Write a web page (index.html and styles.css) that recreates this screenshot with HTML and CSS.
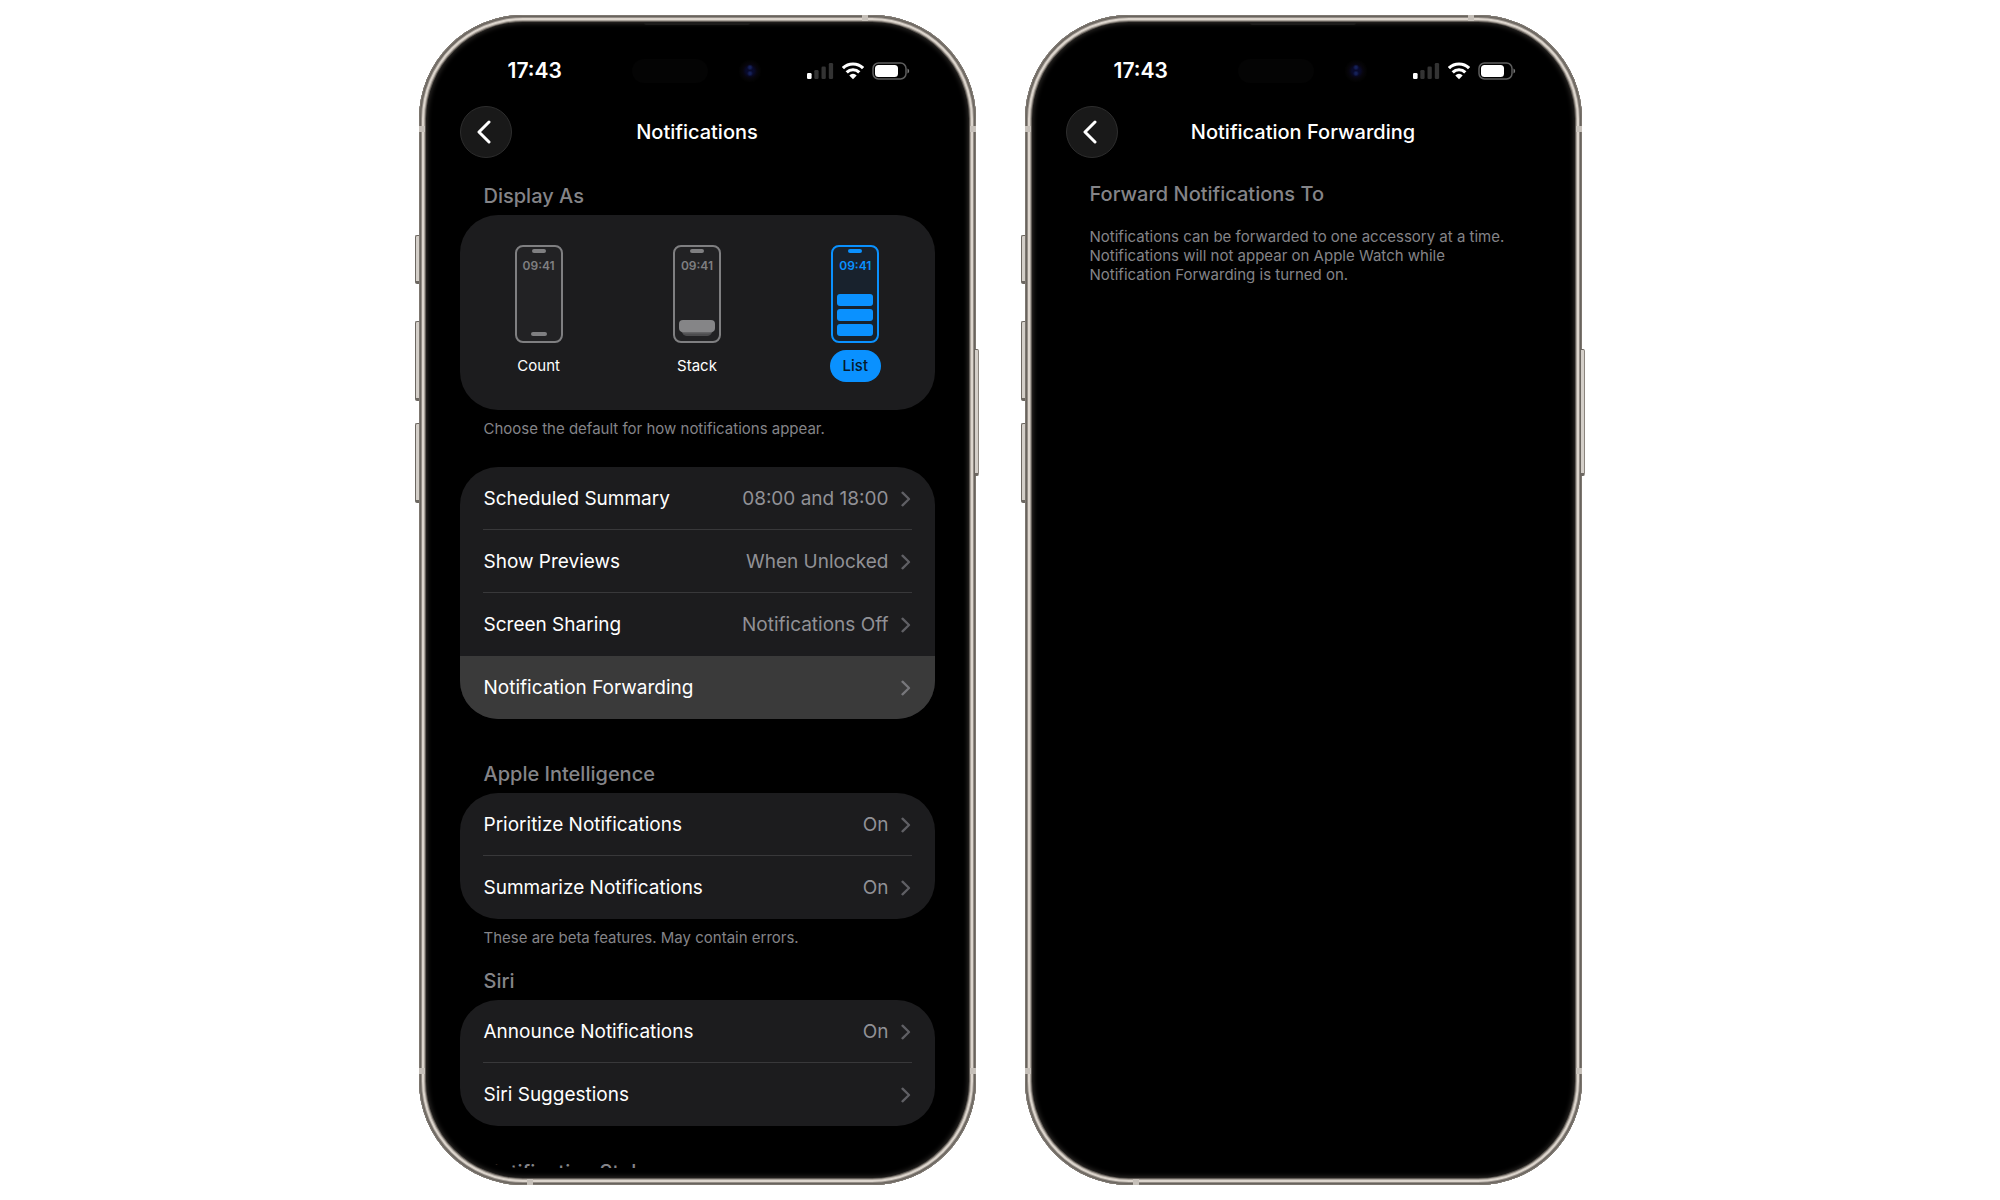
FILE: index.html
```html
<!DOCTYPE html>
<html lang="en">
<head>
<meta charset="utf-8">
<meta name="viewport" content="width=device-width, initial-scale=1">
<title>Notifications</title>
<link rel="stylesheet" href="styles.css">
</head>
<body>
<svg class="sprite" aria-hidden="true">
  <symbol id="chevron" viewBox="0 0 10 16"><path d="M1.500 1.700 8 8 1.500 14.300" fill="none" stroke="currentColor" stroke-width="2.300" stroke-linecap="round" stroke-linejoin="round"/></symbol>
  <symbol id="back" viewBox="0 0 14 24"><path d="M12 2 2 12 12 22" fill="none" stroke="currentColor" stroke-width="3" stroke-linecap="round" stroke-linejoin="round"/></symbol>
  <symbol id="signal" viewBox="0 0 27 18">
    <rect x="0" y="11" width="4.600" height="6" rx="1.300" fill="#fff"/>
    <g fill="#333"><rect x="7.300" y="8" width="4.300" height="9" rx="1.300"/><rect x="14.500" y="4.500" width="4.300" height="12.500" rx="1.300"/><rect x="21.800" y="1" width="4.300" height="16" rx="1.300"/></g>
  </symbol>
  <symbol id="wifi" viewBox="0 0 22 18">
    <g fill="none" stroke="#fff" stroke-width="3.200"><path d="M.9 6.200a14.300 14.300 0 0 1 20.200 0"/><path d="M4.700 10.300a9 9 0 0 1 12.600 0"/></g>
    <path d="M7.300 13.400a5.200 5.200 0 0 1 7.400 0L11 17.300z" fill="#fff"/>
  </symbol>
  <symbol id="battery" viewBox="0 0 38 18">
    <rect x="1" y="1" width="33" height="16" rx="5.500" fill="none" stroke="#5e5e5e" stroke-width="1.500"/>
    <rect x="3" y="3" width="23" height="12" rx="3.500" fill="#fff"/>
    <path d="M35.500 6.500a2.700 2.700 0 0 1 0 5z" fill="#7a7a7a"/>
  </symbol>
</svg>
<main class="stage">
  <section class="phone" aria-label="Notifications">
    <span class="key key-action"></span><span class="key key-up"></span><span class="key key-down"></span><span class="key key-side"></span>
    <span class="band band-left-top"></span><span class="band band-right-top"></span><span class="band band-left-bottom"></span><span class="band band-right-bottom"></span><span class="band band-top"></span><span class="band band-bottom"></span>
    <span class="earpiece"></span>
    <div class="screen">
      <div class="status">
        <time class="clock">17:43</time>
        <div class="island"><span class="sensor"></span><span class="camera"></span></div>
        <div class="indicators"><svg width="27" height="18"><use href="#signal"/></svg><svg width="22" height="18"><use href="#wifi"/></svg><svg width="38" height="18"><use href="#battery"/></svg></div>
      </div>
      <header class="nav">
        <button class="back" type="button" aria-label="Back"><svg width="14" height="24"><use href="#back"/></svg></button>
        <h1 class="title">Notifications</h1>
      </header>
      <div class="content">
        <h2 class="heading">Display As</h2>
        <div class="card styles" role="radiogroup" aria-label="Display As">
          <label class="style">
            <input class="style-input" type="radio" name="display" value="count">
            <span class="mini"><span class="mini-notch"></span><span class="mini-time">09:41</span><span class="mini-count"></span></span>
            <span class="style-name">Count</span>
          </label>
          <label class="style">
            <input class="style-input" type="radio" name="display" value="stack">
            <span class="mini"><span class="mini-notch"></span><span class="mini-time">09:41</span><svg class="mini-stack" width="36" height="16"><path d="M3 11h30c0 3-2 5-6 5H9c-4 0-6-2-6-5z" fill="#4c4c4e"/><path d="M1.500 10h33c-.5 2-2 3.500-5 3.500h-23c-3 0-4.500-1.500-5-3.500z" fill="#636365"/><rect width="36" height="12" rx="4" fill="#858587"/></svg></span>
            <span class="style-name">Stack</span>
          </label>
          <label class="style">
            <input class="style-input" type="radio" name="display" value="list" checked>
            <span class="mini"><span class="mini-notch"></span><span class="mini-time">09:41</span><span class="mini-list"><i class="mini-row"></i><i class="mini-row"></i><i class="mini-row"></i></span></span>
            <span class="style-name">List</span>
          </label>
        </div>
        <p class="note">Choose the default for how notifications appear.</p>
        <nav class="card group-plain">
          <a class="row" href="#summary"><span>Scheduled Summary</span><span class="value">08:00 and 18:00</span><svg class="chev" width="10" height="16"><use href="#chevron"/></svg></a>
          <a class="row" href="#previews"><span>Show Previews</span><span class="value">When Unlocked</span><svg class="chev" width="10" height="16"><use href="#chevron"/></svg></a>
          <a class="row" href="#sharing"><span>Screen Sharing</span><span class="value">Notifications Off</span><svg class="chev" width="10" height="16"><use href="#chevron"/></svg></a>
          <a class="row pressed" href="#forwarding"><span>Notification Forwarding</span><span class="value"></span><svg class="chev" width="10" height="16"><use href="#chevron"/></svg></a>
        </nav>
        <h2 class="heading after-card">Apple Intelligence</h2>
        <nav class="card">
          <a class="row" href="#prioritize"><span>Prioritize Notifications</span><span class="value">On</span><svg class="chev" width="10" height="16"><use href="#chevron"/></svg></a>
          <a class="row" href="#summarize"><span>Summarize Notifications</span><span class="value">On</span><svg class="chev" width="10" height="16"><use href="#chevron"/></svg></a>
        </nav>
        <p class="note">These are beta features. May contain errors.</p>
        <h2 class="heading after-note">Siri</h2>
        <nav class="card">
          <a class="row" href="#announce"><span>Announce Notifications</span><span class="value">On</span><svg class="chev" width="10" height="16"><use href="#chevron"/></svg></a>
          <a class="row" href="#suggestions"><span>Siri Suggestions</span><span class="value"></span><svg class="chev" width="10" height="16"><use href="#chevron"/></svg></a>
        </nav>
        <h2 class="heading last">Notification Style</h2>
      </div>
    </div>
  </section>

  <section class="phone" aria-label="Notification Forwarding">
    <span class="key key-action"></span><span class="key key-up"></span><span class="key key-down"></span><span class="key key-side"></span>
    <span class="band band-left-top"></span><span class="band band-right-top"></span><span class="band band-left-bottom"></span><span class="band band-right-bottom"></span><span class="band band-top"></span><span class="band band-bottom"></span>
    <span class="earpiece"></span>
    <div class="screen">
      <div class="status">
        <time class="clock">17:43</time>
        <div class="island"><span class="sensor"></span><span class="camera"></span></div>
        <div class="indicators"><svg width="27" height="18"><use href="#signal"/></svg><svg width="22" height="18"><use href="#wifi"/></svg><svg width="38" height="18"><use href="#battery"/></svg></div>
      </div>
      <header class="nav">
        <button class="back" type="button" aria-label="Back"><svg width="14" height="24"><use href="#back"/></svg></button>
        <h1 class="title">Notification Forwarding</h1>
      </header>
      <div class="content content-brief">
        <h2 class="heading">Forward Notifications To</h2>
        <p class="note forwarding-note">Notifications can be forwarded to one accessory at a time. Notifications will not appear on Apple Watch while Notification Forwarding is turned on.</p>
      </div>
    </div>
  </section>
</main>
</body>
</html>
```
FILE: styles.css
```css
* { box-sizing: border-box; }
body {
  margin: 0;
  background: #fff;
  color: #fff;
  font-family: Inter, "Liberation Sans", sans-serif;
  font-size: 19px;
  line-height: 26px;
}
h1, h2, p { margin: 0; }
.sprite { display: none; }

.stage {
  display: flex;
  justify-content: center;
  gap: 49px;
  height: 100vh;
  min-height: 800px;
  padding: 15px 24px;
}

/* Phone body */
.phone {
  position: relative;
  display: flex;
  flex: 0 1 557px;
  min-width: 0;
  padding: 8px;
  border-radius: 104px;
  background: #000;
  box-shadow:
    inset 0 0 0 1px #7d7770,
    inset 0 0 0 2px #69645e,
    inset 0 0 0 3px #958e87,
    inset 0 0 0 5px #dcd5cd,
    inset 0 0 0 6px #aaa39b,
    inset 0 0 0 7px #5f5a55,
    inset 0 0 5px 8px #34312e;
}
.key {
  position: absolute;
  left: -4px;
  width: 4px;
  border: 1px solid #6d6862;
  border-right: 0;
  border-bottom-width: 3px;
  border-radius: 2px 0 0 2px;
  background: #d4cfc9;
}
.key-action { top: 220px; height: 49px; }
.key-up { top: 306px; height: 80px; }
.key-down { top: 408px; height: 80px; }
.key-side {
  top: 334px;
  right: -3px;
  left: auto;
  height: 127px;
  border-right: 1px solid #8b857e;
  border-left: 0;
  border-radius: 0 2px 2px 0;
}
.band { position: absolute; background: #c6c0b9; }
.band-left-top, .band-left-bottom { left: 0; width: 6px; height: 6px; }
.band-right-top, .band-right-bottom { right: 0; width: 6px; height: 6px; }
.band-left-top, .band-right-top { top: 111px; }
.band-left-bottom, .band-right-bottom { bottom: 111px; }
.band-top { top: 0; right: 108px; width: 6px; height: 6px; }
.band-bottom { bottom: 0; left: 108px; width: 6px; height: 6px; }
.earpiece {
  position: absolute;
  top: 7px;
  left: 50%;
  width: 106px;
  height: 3px;
  margin-left: -53px;
  border-radius: 0 0 2px 2px;
  background: #1d1c1b;
}

/* Screen */
.screen {
  display: flex;
  flex: 1;
  flex-direction: column;
  min-width: 0;
  margin-bottom: 9px;
  border-radius: 96px;
  overflow: hidden;
}
.status {
  display: grid;
  grid-template-columns: 1fr 130px 1fr;
  align-items: center;
  padding: 35px 0 22px;
}
.clock {
  padding-left: 11px;
  font-size: 21px;
  font-weight: 600;
  text-align: center;
}
.island { display: flex; align-items: center; justify-content: space-between; }
.sensor { width: 76px; height: 24px; border-radius: 12px; background: #040404; }
.camera {
  width: 24px;
  height: 24px;
  border-radius: 50%;
  background:
    radial-gradient(circle at 50% 35%, #152058 0 1px, transparent 3px),
    radial-gradient(circle at 50% 60%, #152058 0 1px, transparent 3px),
    radial-gradient(circle, #080a2c 0 4px, #07050d 7px, #030303 10px, #000 12px);
}
.indicators { display: flex; justify-content: center; gap: 8px; padding-right: 12px; }
.nav {
  display: grid;
  grid-template-columns: 52px 1fr 52px;
  align-items: center;
  padding: 0 33px;
}
.back {
  display: flex;
  align-items: center;
  justify-content: center;
  width: 52px;
  height: 52px;
  padding: 0 4px 0 0;
  border: 1px solid #2e2e2e;
  border-radius: 50%;
  background: #191919;
  color: #fff;
}
.title { font-size: 20px; font-weight: 550; line-height: 26px; text-align: center; white-space: nowrap; }

.content { flex: 1; min-height: 0; padding: 25px 33px 0; }
.content-brief { padding-top: 23px; }
.heading {
  margin: 0 24px 6px;
  color: #848488;
  font-size: 20px;
  font-weight: 550;
  line-height: 26px;
}
.after-card { margin-top: 42px; }
.after-note { margin-top: 21px; }
.last { margin-top: 33px; }
.note {
  margin: 9px 24px 0;
  color: #848488;
  font-size: 15px;
  line-height: 19px;
}
.forwarding-note { margin: 20px 20px 0 24px; }

.card { border-radius: 38px; background: #1c1c1e; overflow: hidden; }
.group-plain { margin-top: 29px; }
.row {
  position: relative;
  display: flex;
  align-items: center;
  height: 63px;
  padding: 0 24px;
  color: #fff;
  text-decoration: none;
  white-space: nowrap;
}
.row + .row::before {
  position: absolute;
  top: -1px;
  right: 23px;
  left: 23px;
  height: 1px;
  background: #38383a;
  content: "";
}
.row.pressed { background: #3a3a3a; }
.row.pressed::before { display: none; }
.value { margin-left: auto; color: #919196; }
.chev { margin-left: 12px; color: #5f5f64; }
.pressed .chev { color: #77777b; }

/* Display style picker */
.styles { display: grid; grid-template-columns: repeat(3, 1fr); padding: 30px 0 28px; }
.style { display: flex; flex-direction: column; align-items: center; gap: 7px; color: #7f7f81; }
.style-input { position: absolute; opacity: 0; pointer-events: none; }
.mini {
  display: flex;
  flex-direction: column;
  align-items: center;
  width: 48px;
  height: 98px;
  padding: 2px 0 5px;
  border: 2px solid currentColor;
  border-radius: 8px;
  background: #222224;
}
.mini-notch { width: 14px; height: 4px; border-radius: 2px; background: currentColor; }
.mini-time { margin-top: 5px; font-size: 12px; font-weight: 600; line-height: 16px; }
.mini-count { width: 16px; height: 4px; margin-top: auto; border-radius: 2px; background: currentColor; }
.mini-stack { margin-top: auto; }
.mini-list { display: flex; flex-direction: column; gap: 3px; margin-top: auto; }
.mini-row { width: 36px; height: 12px; border-radius: 3px; background: currentColor; }
.style-name {
  padding: 3px 13px;
  border-radius: 16px;
  color: #fff;
  font-size: 15px;
  line-height: 26px;
}
.style-input:checked ~ .mini { color: #0a91ff; background: #18222d; }
.style-input:checked ~ .style-name { background: #0a91ff; color: #06192b; font-weight: 500; }
```
